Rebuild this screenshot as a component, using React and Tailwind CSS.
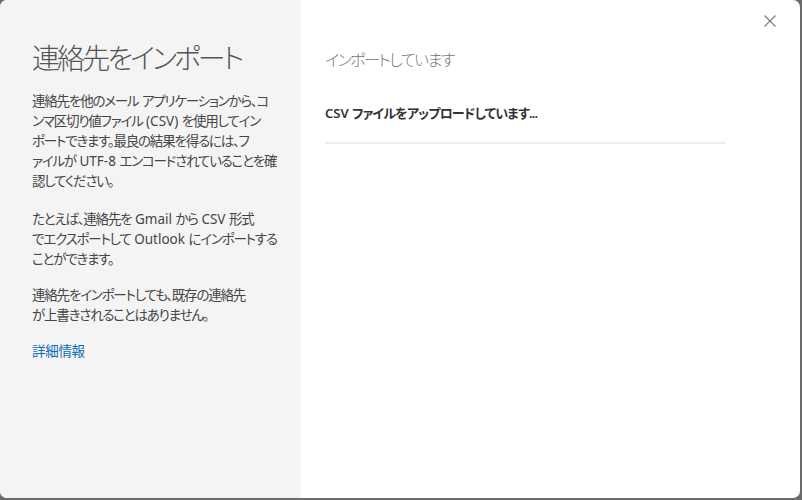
function L({ children }) {
  return <span className="tracking-[0px]">{children}</span>;
}

export default function App() {
  const font = { fontFamily: '"Noto Sans", "Noto Sans CJK JP", sans-serif' };
  return (
    <div className="w-[802px] h-[500px] bg-[#6b6b6b] [font-feature-settings:'palt']" style={font}>
      <div className="w-[800px] h-[498px] rounded-[7px] overflow-hidden flex bg-white">
        <div className="w-[301px] h-full bg-[#f4f4f4] pl-[32px] pr-[20px] pt-[40px]">
          <h1 className="text-[28px] leading-[36px] font-extralight text-[#555] whitespace-nowrap tracking-[-2.9px]">連絡先をインポート</h1>
          <div className="mt-[15px] text-[13.5px] leading-[20px] text-[#464646] whitespace-nowrap tracking-[-1.2px]">
            <p>連絡先を他のメール<L> </L>アプリケーションから、コ<br />ンマ区切り値ファイル<L> (CSV) </L>を使用してイン<br />ポートできます。最良の結果を得るには、フ<br />ァイルが<L> UTF-8 </L>エンコードされていることを確<br />認してください。</p>
            <p className="mt-[18px]">たとえば、連絡先を<L> Gmail </L>から<L> CSV </L>形式<br />でエクスポートして<L> Outlook </L>にインポートする<br />ことができます。</p>
            <p className="mt-[16px]">連絡先をインポートしても、既存の連絡先<br />が上書きされることはありません。</p>
            <p className="mt-[16px]"><a className="text-[#0f6cbd] tracking-[-0.3px]">詳細情報</a></p>
          </div>
        </div>
        <div className="flex-1 h-full relative pl-[24px] pt-[48px]">
          <button className="absolute top-[15px] right-[24px] w-[12px] h-[12px] text-[#7a7a7a]">
            <svg viewBox="0 0 12 12" width="12" height="12" fill="none" stroke="currentColor" strokeWidth="1.1">
              <path d="M0.5 0.5 L11.5 11.5 M11.5 0.5 L0.5 11.5" />
            </svg>
          </button>
          <h2 className="text-[16px] leading-[24px] font-light text-[#777] tracking-[-1.5px]">インポートしています</h2>
          <div className="mt-[31px] text-[13px] leading-[20px] font-semibold text-[#333] tracking-[-0.8px]"><L>CSV </L>ファイルをアップロードしています...</div>
          <div className="mt-[19px] w-[400px] h-[2px] bg-[#ececec]"></div>
        </div>
      </div>
    </div>
  );
}
